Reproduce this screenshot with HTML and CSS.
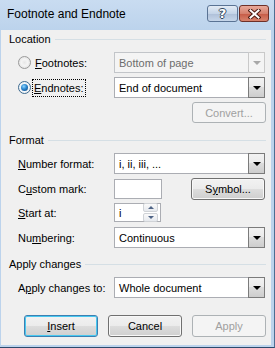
FILE: index.html
```html
<!DOCTYPE html>
<html lang="en">
<head>
    <meta charset="UTF-8">
    <title>Footnote and Endnote</title>
    <link rel="stylesheet" href="styles.css">
</head>
<body>

<div class="window">
    <div class="titlebar">
        <span class="title">Footnote and Endnote</span>
        <div class="caption-buttons">
            <div class="cap-btn help">?</div>
            <div class="cap-btn close">
                <svg width="13" height="10" viewBox="0 0 13 10">
                    <path d="M2.5 1.5 L10.5 8.5 M10.5 1.5 L2.5 8.5" stroke="#4a1a12" stroke-width="4" stroke-linecap="square"/>
                    <path d="M2.5 1.5 L10.5 8.5 M10.5 1.5 L2.5 8.5" stroke="#ffffff" stroke-width="2" stroke-linecap="square"/>
                </svg>
            </div>
        </div>
    </div>

    <div class="client">
        <!-- Location -->
        <div class="group-head"><span>Location</span></div>
        <div class="row gap-4">
            <label class="radio-label">
                <span class="radio"></span>
                <span class="radio-text"><u>F</u>ootnotes:</span>
            </label>
            <div class="combo disabled">Bottom of page<span class="arrow"></span></div>
        </div>
        <div class="row gap-4">
            <label class="radio-label">
                <span class="radio checked"></span>
                <span class="radio-text focus"><u>E</u>ndnotes:</span>
            </label>
            <div class="combo">End of document<span class="arrow"></span></div>
        </div>
        <div class="button-row gap-4">
            <div class="btn disabled">Convert...</div>
        </div>

        <!-- Format -->
        <div class="group-head gap-8"><span>Format</span></div>
        <div class="row gap-4">
            <span class="label"><u>N</u>umber format:</span>
            <div class="combo">i, ii, iii, ...<span class="arrow"></span></div>
        </div>
        <div class="row tall gap-4">
            <span class="label">C<u>u</u>stom mark:</span>
            <div class="mark-line">
                <div class="textbox"></div>
                <div class="btn">S<u>y</u>mbol...</div>
            </div>
        </div>
        <div class="row short gap-3">
            <span class="label"><u>S</u>tart at:</span>
            <div class="spin">
                <span class="spin-value">i</span>
                <div class="spin-buttons">
                    <span class="spin-up"></span>
                    <span class="spin-down"></span>
                </div>
            </div>
        </div>
        <div class="row gap-5">
            <span class="label">Nu<u>m</u>bering:</span>
            <div class="combo">Continuous<span class="arrow"></span></div>
        </div>

        <!-- Apply changes -->
        <div class="group-head gap-7"><span>Apply changes</span></div>
        <div class="row gap-4">
            <span class="label">A<u>p</u>ply changes to:</span>
            <div class="combo">Whole document<span class="arrow"></span></div>
        </div>

        <div class="footer">
            <div class="btn default"><u>I</u>nsert</div>
            <div class="btn">Cancel</div>
            <div class="btn disabled">Apply</div>
        </div>
    </div>
</div>

</body>
</html>
```

FILE: styles.css
```css
body {
    margin: 0;
    font-family: "Liberation Sans", Arial, sans-serif;
    font-size: 11px;
    color: #000000;
}

u {
    text-decoration: underline;
    text-underline-offset: 1px;
}

.window {
    width: 275px;
    height: 348px;
    box-sizing: border-box;
    background-color: #bcd3ec;
    border-right: 1px solid #4d6e92;
    border-bottom: 1px solid #2c4a6c;
    display: flex;
    flex-direction: column;
}

/* Title bar */
.titlebar {
    height: 30px;
    flex-shrink: 0;
    display: flex;
    align-items: flex-start;
    padding: 0 5px 0 7px;
    background: linear-gradient(#c9dcf1, #bcd3ec);
}

.title {
    flex: 1;
    font-size: 12px;
    line-height: 28px;
    white-space: nowrap;
}

.caption-buttons {
    display: flex;
    gap: 1px;
    margin-top: 5px;
}

.cap-btn {
    height: 15px;
    box-sizing: content-box;
    border: 1px solid #5a7394;
    border-radius: 3px;
    display: flex;
    align-items: center;
    justify-content: center;
}

.help {
    width: 29px;
    background: linear-gradient(#e3ebf5, #c4d4e8 50%, #aebfd8 51%, #c6d6ea);
    color: #ffffff;
    font-weight: bold;
    font-size: 13px;
    font-family: "DejaVu Sans", sans-serif;
    text-shadow: 1px 0 #34465e, -1px 0 #34465e, 0 1px #34465e, 0 -1px #34465e;
}

.close {
    width: 28px;
    border-color: #6e3028;
    background: linear-gradient(#e9a99b, #d5806d 50%, #c65a45 51%, #d7826c);
}

/* Client area */
.client {
    flex: 1;
    background-color: #f0f0f0;
    margin: 0 3px 2px 1px;
    padding: 0 5px 0 8px;
    display: flex;
    flex-direction: column;
}

.gap-3 { margin-top: 3px; }
.gap-4 { margin-top: 4px; }
.gap-5 { margin-top: 5px; }
.gap-7 { margin-top: 7px; }
.gap-8 { margin-top: 8px; }

.group-head {
    height: 18px;
    display: flex;
    align-items: center;
}

.group-head::after {
    content: "";
    flex: 1;
    height: 1px;
    margin-left: 4px;
    background-color: #d5dfe5;
}

.row {
    display: grid;
    grid-template-columns: 96px 151px;
    align-items: center;
    padding-left: 9px;
    height: 21px;
}

.row.tall {
    height: 22px;
}

.row.short {
    height: 19px;
}

.label {
    white-space: nowrap;
}

/* Radio buttons */
.radio-label {
    display: flex;
    align-items: center;
}

.radio {
    width: 11px;
    height: 11px;
    border: 1px solid #9a9a9a;
    border-radius: 50%;
    background: radial-gradient(circle at 50% 50%, #e6e6e6 0, #f4f4f4 40%, #d9d9d9 100%);
    position: relative;
}

.radio.checked {
    border-color: #3d6a8f;
    background: radial-gradient(circle at 50% 50%, #ffffff 0, #e8eef3 100%);
}

.radio.checked::after {
    content: "";
    position: absolute;
    left: 2px;
    top: 2px;
    width: 7px;
    height: 7px;
    border-radius: 50%;
    background: radial-gradient(circle at 40% 35%, #8fd6ff 0, #2a86cf 45%, #0d3f75 100%);
}

.radio-text {
    margin-left: 4px;
    white-space: nowrap;
}

.radio-text.focus {
    margin-left: 2px;
    padding: 0 1px;
    line-height: 16px;
    outline: 1px dotted #000000;
}

/* Combo boxes */
.combo {
    height: 21px;
    box-sizing: border-box;
    border: 1px solid #abadb3;
    background-color: #ffffff;
    padding-left: 4px;
    display: flex;
    align-items: center;
    white-space: nowrap;
}

.combo .arrow {
    margin: -1px -1px -1px auto;
    width: 17px;
    height: 21px;
    box-sizing: border-box;
    border: 1px solid #7b7b7b;
    background: linear-gradient(#f2f2f2, #ebebeb 45%, #dcdcdc 50%, #cdcdcd);
    display: flex;
    align-items: center;
    justify-content: center;
}

.combo .arrow::after {
    content: "";
    border-left: 4px solid transparent;
    border-right: 4px solid transparent;
    border-top: 4px solid #000000;
    margin-top: 1px;
}

.combo.disabled {
    background-color: #f4f4f4;
    border-color: #c2c5c9;
    color: #6d6d6d;
}

.combo.disabled .arrow {
    border-color: #c9c9c9;
    background: #f4f4f4;
}

.combo.disabled .arrow::after {
    border-top-color: #a8a8a8;
}

/* Text inputs */
.mark-line {
    display: flex;
    align-items: center;
    justify-content: space-between;
}

.textbox {
    width: 48px;
    height: 20px;
    box-sizing: border-box;
    border: 1px solid #abadb3;
    background-color: #ffffff;
}

.spin {
    width: 47px;
    height: 19px;
    box-sizing: border-box;
    border: 1px solid #abadb3;
    background-color: #ffffff;
    display: flex;
    align-items: center;
    padding-right: 2px;
}

.spin-value {
    flex: 1;
    padding-left: 4px;
}

.spin-buttons {
    width: 15px;
    display: flex;
    flex-direction: column;
    gap: 1px;
}

.spin-up,
.spin-down {
    height: 7px;
    border: 1px solid #d0d3d7;
    border-radius: 2px;
    background: linear-gradient(#fafafa, #e6e9ee);
    display: flex;
    align-items: center;
    justify-content: center;
}

.spin-up::after {
    content: "";
    border-left: 3px solid transparent;
    border-right: 3px solid transparent;
    border-bottom: 3px solid #4f6486;
}

.spin-down::after {
    content: "";
    border-left: 3px solid transparent;
    border-right: 3px solid transparent;
    border-top: 3px solid #4f6486;
}

/* Push buttons */
.button-row {
    display: flex;
    justify-content: flex-end;
}

.btn {
    width: 74px;
    height: 22px;
    box-sizing: border-box;
    border: 1px solid #707070;
    border-radius: 3px;
    background: linear-gradient(#f2f2f2, #ebebeb 50%, #dddddd 51%, #cfcfcf);
    box-shadow: inset 0 0 0 1px #f8f8f8;
    display: flex;
    align-items: center;
    justify-content: center;
    white-space: nowrap;
}

.btn.default {
    border-color: #3c7fb1;
    box-shadow: inset 0 0 0 1px #48c8f0;
}

.btn.disabled {
    border-color: #adb2b5;
    background: #f4f4f4;
    box-shadow: none;
    color: #a0a0a0;
}

.button-row .btn {
    height: 21px;
}

.footer {
    margin-top: 17px;
    display: flex;
    justify-content: flex-end;
    gap: 10px;
}
```
